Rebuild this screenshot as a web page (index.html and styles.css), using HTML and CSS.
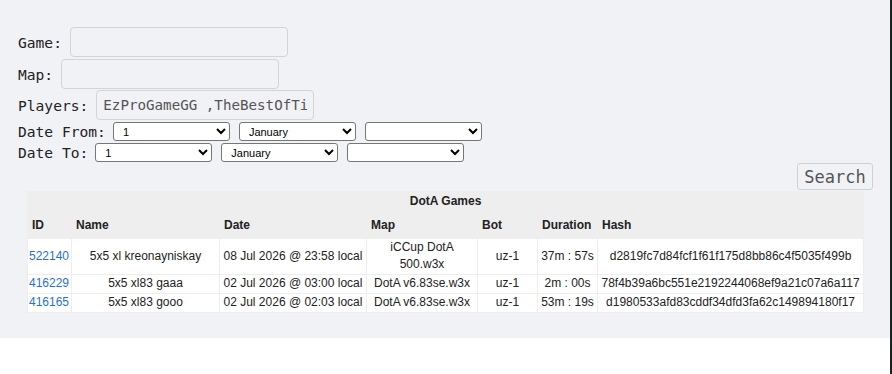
FILE: index.html
```html
<!DOCTYPE html>
<html>
<head>
<meta charset="utf-8">
<title>DotA Games</title>
<link rel="stylesheet" href="styles.css">
</head>
<body>
<div class="page">
  <form class="filters">
    <div class="row"><label class="lbl">Game:</label><input class="text" type="text"></div>
    <div class="row row-map"><label class="lbl">Map:</label><input class="text" type="text"></div>
    <div class="row row-players"><label class="lbl">Players:</label><input class="text" type="text" value="EzProGameGG ,TheBestOfTime"></div>
    <div class="daterow daterow-from">
      <label class="lbl">Date From:</label>
      <select class="sel"><option>1</option></select>
      <select class="sel"><option>January</option></select>
      <select class="sel"><option></option></select>
    </div>
    <div class="daterow daterow-to">
      <label class="lbl">Date To:</label>
      <select class="sel"><option>1</option></select>
      <select class="sel"><option>January</option></select>
      <select class="sel"><option></option></select>
    </div>
    <div class="actions"><button class="search" type="button">Search</button></div>
  </form>
  <table class="games">
    <colgroup>
      <col class="c-id"><col class="c-name"><col class="c-date"><col class="c-map"><col class="c-bot"><col class="c-dur"><col class="c-hash">
    </colgroup>
    <thead>
      <tr><th class="title" colspan="7">DotA Games</th></tr>
      <tr class="heads"><th>ID</th><th>Name</th><th>Date</th><th>Map</th><th>Bot</th><th>Duration</th><th>Hash</th></tr>
    </thead>
    <tbody>
      <tr><td class="id"><a href="#">522140</a></td><td>5x5 xl kreonayniskay</td><td>08 Jul 2026 @ 23:58 local</td><td>iCCup DotA 500.w3x</td><td>uz-1</td><td>37m : 57s</td><td>d2819fc7d84fcf1f61f175d8bb86c4f5035f499b</td></tr>
      <tr><td class="id"><a href="#">416229</a></td><td>5x5 xl83 gaaa</td><td>02 Jul 2026 @ 03:00 local</td><td>DotA v6.83se.w3x</td><td>uz-1</td><td>2m : 00s</td><td>78f4b39a6bc551e2192244068ef9a21c07a6a117</td></tr>
      <tr><td class="id"><a href="#">416165</a></td><td>5x5 xl83 gooo</td><td>02 Jul 2026 @ 02:03 local</td><td>DotA v6.83se.w3x</td><td>uz-1</td><td>53m : 19s</td><td>d1980533afd83cddf34dfd3fa62c149894180f17</td></tr>
    </tbody>
  </table>
</div>
</body>
</html>
```
FILE: styles.css
```css
html {
  margin: 0;
  min-height: 100%;
  background: #ffffff;
  border-right: 2px solid #1e1f22;
}
body {
  margin: 0;
}
.page {
  background: #f1f2f6;
  padding: 27px 17px 25px 18px;
}
.filters {
  margin: 0;
}
.row {
  display: flex;
  align-items: center;
  gap: 8px;
  height: 30px;
}
.row-map { margin-top: 2px; }
.row-players { margin-top: 1px; }
.lbl {
  font-family: "DejaVu Sans Mono", monospace;
  font-size: 14.6px;
  color: #222;
}
.text {
  box-sizing: border-box;
  width: 218px;
  height: 30px;
  margin: 0;
  padding: 0 6px;
  border: 1px solid #d3d4d8;
  border-radius: 4px;
  background: #f1f2f6;
  font-family: "DejaVu Sans Mono", monospace;
  font-size: 14.2px;
  color: #555;
  outline: none;
}
.daterow {
  display: flex;
  align-items: center;
  gap: 9px;
  height: 19px;
}
.daterow .lbl {
  margin-right: -2px;
}
.daterow-from { margin-top: 2px; }
.daterow-to { margin-top: 2px; }
.sel {
  box-sizing: border-box;
  width: 117px;
  height: 19px;
  margin: 0;
  padding: 0 0 0 5px;
  font-family: "Liberation Sans", Arial, sans-serif;
  font-size: 11px;
  background: #fff;
  border: 1px solid #767676;
  border-radius: 3px;
  color: #000;
}
.actions {
  display: flex;
  justify-content: flex-end;
  margin-top: 1px;
}
.search {
  box-sizing: border-box;
  width: 76px;
  height: 27px;
  margin: 0;
  padding: 0;
  border: 1px solid #cfd0d4;
  border-radius: 3px;
  background: #f1f2f6;
  font-family: "DejaVu Sans Mono", monospace;
  font-size: 17px;
  color: #555;
}
.games {
  margin: 1px 10px 0 9px;
  width: 836px;
  table-layout: fixed;
  border-collapse: collapse;
  background: #eeeeee;
  font-family: "Liberation Sans", Arial, sans-serif;
  font-size: 12px;
  color: #222;
}
.c-id { width: 44px; }
.c-name { width: 148px; }
.c-date { width: 147px; }
.c-map { width: 111px; }
.c-bot { width: 60px; }
.c-dur { width: 60px; }
.c-hash { width: 266px; }
.games th {
  font-weight: bold;
  text-align: left;
  line-height: 17px;
  padding: 4px 4px;
  border: 1px solid #eeeeee;
}
.games th.title {
  text-align: center;
  padding: 1px 4px 2px;
}
.games td {
  background: #ffffff;
  text-align: center;
  line-height: 17px;
  padding: 0 1px 1px;
  border: 1px solid #eeeeee;
  white-space: normal;
}
.games td.id {
  text-align: left;
}
.games a {
  color: #1f72d4;
  text-decoration: none;
}
```
